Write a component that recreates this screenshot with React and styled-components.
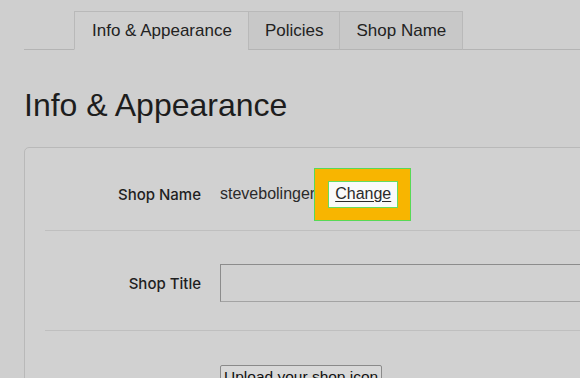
import React from "react";
import styled, { createGlobalStyle } from "styled-components";

const GlobalStyle = createGlobalStyle`
  html, body {
    margin: 0;
    padding: 0;
    background: #cfcfcf;
  }
  body {
    font-family: "Liberation Sans", Arial, sans-serif;
    color: #222;
  }
`;

const tabs = [
  { label: "Info & Appearance", active: true },
  { label: "Policies" },
  { label: "Shop Name" },
];

const App = () => {
  return (
    <>
      <GlobalStyle />
      <Page>
        <TabBar>
          {tabs.map((t) => (
            <Tab key={t.label} $active={t.active}>
              {t.label}
            </Tab>
          ))}
        </TabBar>

        <Heading>Info &amp; Appearance</Heading>

        <Card>
          <Row $pad="33px 0 22px">
            <Label>Shop Name</Label>
            <Value>
              stevebolinger
              <Callout>
                <ChangeLink href="#">Change</ChangeLink>
              </Callout>
            </Value>
          </Row>

          <Row $pad="33px 0 28px">
            <Label>Shop Title</Label>
            <TextInput type="text" />
          </Row>

          <Row $pad="34px 0 30px" $last $top>
            <Label $offset="10px">Shop Icon</Label>
            <UploadButton type="button">Upload your shop icon</UploadButton>
          </Row>
        </Card>
      </Page>
    </>
  );
};

export default App;

const Page = styled.div`
  width: 580px;
  height: 378px;
  overflow: hidden;
  padding-left: 24px;
  box-sizing: border-box;
`;

const TabBar = styled.div`
  display: flex;
  align-items: flex-end;
  height: 49px;
  padding-left: 50px;
  border-bottom: 1px solid #b4b4b4;
`;

const Tab = styled.div`
  height: 39px;
  display: flex;
  align-items: center;
  padding: 0 ${(p) => (p.$active ? "16px 0 17px" : "16px")};
  font-size: 17px;
  color: #222;
  background: ${(p) => (p.$active ? "#cfcfcf" : "#c8c8c8")};
  border: 1px solid #b9b9b9;
  border-bottom: ${(p) => (p.$active ? "1px solid #cfcfcf" : "1px solid #b4b4b4")};
  margin-bottom: -1px;
  margin-left: ${(p) => (p.$active ? "0" : "-1px")};
  box-sizing: border-box;
`;

const Heading = styled.h1`
  margin: 36px 0 23px 0;
  font-size: 32px;
  line-height: 38px;
  font-weight: 400;
  color: #1d1d1d;
`;

const Card = styled.section`
  margin-right: -30px;
  padding-left: 20px;
  border: 1px solid #b9b9b9;
  border-radius: 5px;
  background: #d1d1d1;
`;

const Row = styled.div`
  display: grid;
  grid-template-columns: 156px 1fr;
  column-gap: 19px;
  align-items: ${(p) => (p.$top ? "start" : "center")};
  padding: ${(p) => p.$pad};
  border-bottom: ${(p) => (p.$last ? "none" : "1px solid #bfbfbf")};
`;

const Label = styled.div`
  text-align: right;
  padding-top: ${(p) => p.$offset || "0"};
  font-family: Inter, "Liberation Sans", sans-serif;
  font-size: 15px;
  font-weight: 500;
  color: #1f1f1f;
  white-space: nowrap;
`;

const Value = styled.div`
  font-size: 16px;
  color: #2a2a2a;
  white-space: nowrap;
  line-height: 22px;
`;

const Callout = styled.span`
  position: relative;
  display: inline-block;
  margin-left: 13px;

  &::before {
    content: "";
    position: absolute;
    top: -13px;
    bottom: -13px;
    left: -14px;
    right: -13px;
    background: #f8b500;
    border: 1.5px solid #57d957;
  }
`;

const ChangeLink = styled.a`
  position: relative;
  z-index: 1;
  display: inline-block;
  padding: 1px 6px 2px;
  background: #fafafa;
  border: 1.5px solid #66dd5f;
  color: #2a2a2a;
  font-size: 16px;
  text-decoration: underline;
  text-underline-offset: 2px;
`;

const TextInput = styled.input`
  width: 420px;
  height: 38px;
  box-sizing: border-box;
  background: #d1d1d1;
  border: 1px solid #a3a3a3;
  border-top-color: #8c8c8c;
  border-left-color: #8c8c8c;
  font-family: inherit;
  font-size: 15px;
`;

const UploadButton = styled.button`
  justify-self: start;
  height: 24px;
  padding: 0 3px;
  font-family: "Liberation Sans", Arial, sans-serif;
  font-size: 15.5px;
  color: #111;
  background: #d8d8d8;
  border: 1px solid #8a8a8a;
  border-radius: 2px;
`;
